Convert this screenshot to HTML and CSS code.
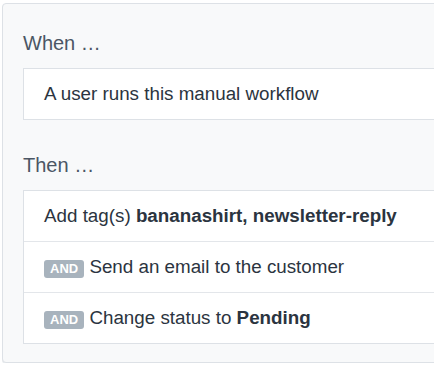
FILE: index.html
```html
<!DOCTYPE html>
<html>
    <head>
        <meta charset="utf-8">
        <title>Workflow</title>
        <link rel="stylesheet" href="styles.css">
    </head>
    <body>
        <div class="workflow">
            <h2>When …</h2>
            <ul class="steps">
                <li>A user runs this manual workflow</li>
            </ul>

            <h2>Then …</h2>
            <ul class="steps">
                <li>Add tag(s) <strong>bananashirt, newsletter-reply</strong></li>
                <li><span class="and">AND</span> Send an email to the customer</li>
                <li><span class="and">AND</span> Change status to <strong>Pending</strong></li>
            </ul>
        </div>
    </body>
</html>
```

FILE: styles.css
```css
html, body {
    margin: 0;
    padding: 0;
    overflow: hidden;
    background: #fff;
}

body {
    padding: 3px 0 0 2px;
    font-family: "Liberation Sans", Arial, sans-serif;
    color: #2b3440;
}

.workflow {
    width: 480px;
    border: 1px solid #dde1e6;
    border-radius: 4px;
    background: #f8f9fa;
    padding: 27px 20px 18px 20px;
    box-shadow: 0 1px 0 #e9ecef;
}

h2 {
    margin: 0 0 13px;
    font-size: 20px;
    line-height: 24px;
    font-weight: normal;
    color: #4b5664;
}

.steps {
    list-style: none;
    margin: 0 0 33px;
    padding: 0;
    background: #fff;
    border: 1px solid #dde1e6;
}

.steps:last-child {
    margin-bottom: 0;
}

.steps li {
    padding: 0 20px;
    height: 50px;
    line-height: 50px;
    font-size: 18.8px;
    border-top: 1px solid #e3e6ea;
}

.steps li:first-child {
    border-top: 0;
}

.steps strong {
    font-weight: bold;
}

.and {
    display: inline-block;
    vertical-align: 0;
    background: #a8b3bd;
    color: #fff;
    font-size: 13px;
    font-weight: bold;
    line-height: 18px;
    padding: 0 6px;
    border-radius: 3px;
}
```
